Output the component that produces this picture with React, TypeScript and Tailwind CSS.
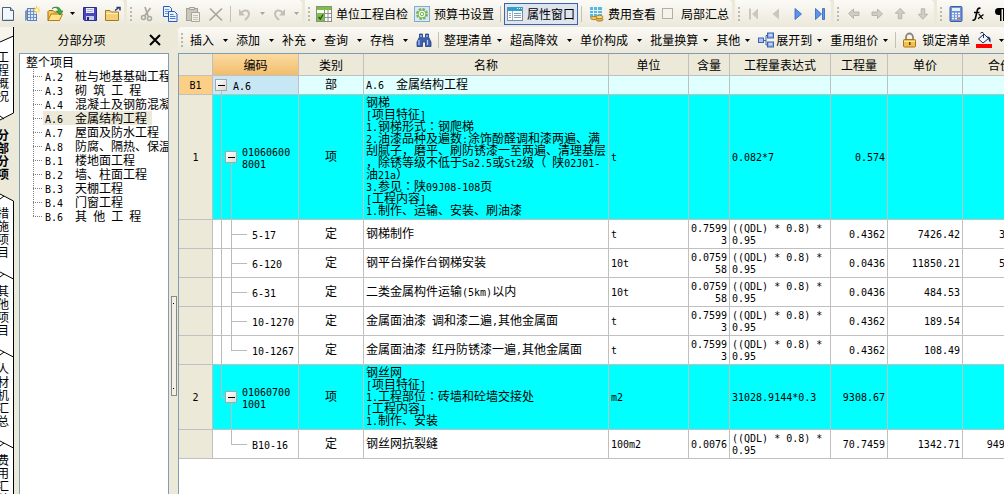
import type { ReactNode } from 'react';

/* Latin runs use a half-width mono face so that two of them fill one Chinese character;
   the full-width colon comes from a face that centres it in its square. */
function T({ children }: { children: string }) {
  const parts = children.split(/([\x20-\x7e]+|：)/).filter((p) => p !== '');
  return (
    <>
      {parts.map((p, i) => {
        if (p === '：') {
          return (
            <span key={i} lang="zh-TW" className="font-['Noto_Sans_CJK_TC',sans-serif]">
              {p}
            </span>
          );
        }
        return /^[\x20-\x7e]/.test(p) ? (
          <span key={i} className="whitespace-pre font-['DejaVu_Sans_Mono',monospace] text-[10px] leading-[0px]">
            {p}
          </span>
        ) : (
          <span key={i}>{p}</span>
        );
      })}
    </>
  );
}

function Icon({ children }: { children: ReactNode }) {
  return (
    <svg viewBox="0 0 16 16" className="size-4 shrink-0" aria-hidden="true">
      {children}
    </svg>
  );
}

const NewDoc = () => (
  <Icon>
    <path d="M2.500 1.500h8l3 3v10h-11z" fill="#f3f7fd" stroke="#4e5f80" />
    <path d="M10.500 1.500v3h3" fill="#b9cbe6" stroke="#4e5f80" />
    <path d="M4 13h9v1H4z" fill="#c5d5ec" />
  </Icon>
);
const NewGrid = () => (
  <Icon>
    <path d="M1 5l3-2v10l-3 2z" fill="#7d93b8" />
    <rect x="3.500" y="2.500" width="9" height="12" fill="#dce8f8" stroke="#5d7fb5" />
    <path d="M6.500 3v11M9.500 3v11M4 5.500h8M4 8.500h8M4 11.500h8" stroke="#6f93c9" />
    <path d="M12.500 0v8M8.500 4h8M10 1.500l5 5M15 1.500l-5 5" stroke="#f4c430" />
    <circle cx="12.500" cy="4" r="1.800" fill="#fff6b0" />
  </Icon>
);
const OpenFolder = () => (
  <Icon>
    <path d="M1 14.500V5.500l1-1h4l1.500 1.500H12v2" fill="#f5c95a" stroke="#9c6a12" />
    <path d="M1 14.500l3-6.500h11.500l-3 6.500z" fill="#ffe38a" stroke="#b57b14" />
    <path d="M5 2.500c3-2 6-1 6.500 2.500H9.500l3.500 4 3-4h-2C13.500 1 9 0 5 2.500z" fill="#3cae3c" stroke="#1c7a25" strokeWidth=".7" />
  </Icon>
);
const Save = () => (
  <Icon>
    <path d="M1.500 1.500h13v13h-12l-1-1z" fill="#4747b8" stroke="#2b2b8c" />
    <path d="M4 2h8v5H4z" fill="#eef0fb" />
    <path d="M5 3.500h6M5 5.500h6" stroke="#a9aee0" />
    <path d="M4 10h8v4H4z" fill="#c9cdf0" />
    <path d="M5 11h2v3H5z" fill="#26267c" />
  </Icon>
);
const FolderUp = () => (
  <Icon>
    <path d="M.5 14.500v-10h4.500l1.500 1.500h7v8.500z" fill="#f5cf78" stroke="#a9781e" />
    <path d="M1 7.500h12" stroke="#fff0bd" />
    <path d="M10 4.500l4-3m-2.500 0H15v3" fill="none" stroke="#26386b" strokeWidth="1.500" />
  </Icon>
);
const Cut = () => (
  <Icon>
    <path d="M6 1l3 9M11.500 2L5.500 10" stroke="#aaa89e" strokeWidth="1.700" />
    <circle cx="4.500" cy="11.500" r="2" fill="none" stroke="#aaa89e" strokeWidth="1.500" />
    <circle cx="10.500" cy="12.500" r="2" fill="none" stroke="#aaa89e" strokeWidth="1.500" />
  </Icon>
);
const Copy = () => (
  <Icon>
    <path d="M1.500.5h6l2 2v8h-8z" fill="#e9f1ff" stroke="#2b5bb8" />
    <path d="M3 3.500h4M3 5.500h5M3 7.500h5" stroke="#6e97dc" />
    <path d="M6.500 5.500h6l2.500 2.500v7.500H6.500z" fill="#e9f1ff" stroke="#2b5bb8" />
    <path d="M8 8.500h3.500M8 10.500h5.500M8 12.500h5.500" stroke="#4c7dd0" />
  </Icon>
);
const Paste = () => (
  <Icon>
    <rect x="1.500" y="2.500" width="11" height="12" fill="#c9c7bc" stroke="#a3a196" />
    <path d="M4.500 3.500v-2h5v2z" fill="#e9e7de" stroke="#a3a196" />
    <path d="M6.500 6.500h8v9h-8z" fill="#f1f0ea" stroke="#a9a79c" />
    <path d="M8 9.500h5M8 11.500h5M8 13.500h5" stroke="#c3c1b7" />
  </Icon>
);
const Cross = () => (
  <Icon>
    <path d="M2 2.500l12 12M14 2.500l-12.500 12" stroke="#a9a79d" strokeWidth="1.700" />
  </Icon>
);
const Undo = () => (
  <Icon>
    <path d="M4 7c3-4 8-3 8 1 0 3-2 4-4 6" fill="none" stroke="#c2c0b6" strokeWidth="2" />
    <path d="M2 3v6.500h6z" fill="#c2c0b6" />
  </Icon>
);
const Redo = () => (
  <Icon>
    <path d="M12 7c-3-4-8-3-8 1 0 3 2 4 4 6" fill="none" stroke="#c2c0b6" strokeWidth="2" />
    <path d="M14 3v6.500H8z" fill="#c2c0b6" />
  </Icon>
);
const SheetCheck = () => (
  <Icon>
    <rect x=".5" y=".5" width="15" height="15" fill="#fff" stroke="#8a8f86" />
    <path d="M1 1h14v3H1z" fill="#7ac143" />
    <path d="M1 7.500h14M1 11.500h14M8.500 4v11M12 4v11" stroke="#8c9389" />
    <rect x="1" y="7" width="7" height="8" fill="#7fbf4a" />
    <path d="M2.500 11l1.800 2L7 8.500" fill="none" stroke="#205c12" strokeWidth="1.400" />
  </Icon>
);
const Gear = () => (
  <Icon>
    <rect x=".5" y=".5" width="15" height="15" fill="#d7e9f7" stroke="#86abc9" />
    <circle cx="8" cy="8" r="5" fill="#eef8e6" stroke="#79b259" strokeWidth="2" strokeDasharray="2.500 1.400" />
    <circle cx="8" cy="8" r="4" fill="#eef8e6" stroke="#79b259" />
    <circle cx="8" cy="8" r="1.700" fill="#fff" stroke="#79b259" />
  </Icon>
);
const PropWindow = () => (
  <Icon>
    <rect x=".5" y="1.500" width="15" height="13" fill="#fff" stroke="#7c8b99" />
    <path d="M1 1h14v4H1z" fill="#2f9fd0" />
    <path d="M10 2.500h1M12 2.500h1M14 2.500h.8" stroke="#fff" />
    <path d="M5.500 5v9" stroke="#a4b2bd" />
    <path d="M2 7.500h2M2 9.500h2M2 11.500h2M7 7.500h7M7 9.500h7M7 11.500h7" stroke="#7fa3b8" />
  </Icon>
);
const Cost = () => (
  <Icon>
    <rect x="2" y="1" width="12" height="10" fill="#5ab8e0" />
    <path d="M2 4.500h12M2 7.500h12M5.500 1v10M9.500 1v10" stroke="#dff3fb" />
    <ellipse cx="6" cy="12" rx="3.500" ry="1.700" fill="#f0c65c" stroke="#a8741a" strokeWidth=".8" />
    <ellipse cx="11.500" cy="13.500" rx="3.500" ry="1.700" fill="#e5b24a" stroke="#a8741a" strokeWidth=".8" />
    <ellipse cx="11.500" cy="11" rx="3.500" ry="1.700" fill="#f7d67e" stroke="#a8741a" strokeWidth=".8" />
  </Icon>
);
const First = () => (
  <Icon>
    <path d="M3 2.500h2v11H3zM12 2.500v11L6 8z" fill="#c9c7be" />
  </Icon>
);
const Prev = () => (
  <Icon>
    <path d="M11 2.500v11L4.500 8z" fill="#c9c7be" />
  </Icon>
);
const Next = () => (
  <Icon>
    <path d="M5 2.500v11L11.500 8z" fill="#5d93ea" stroke="#2e62c4" strokeWidth=".8" />
  </Icon>
);
const Last = () => (
  <Icon>
    <path d="M3.500 2.500v11l6-5.500zM10.500 2.500h2v11h-2z" fill="#5d93ea" stroke="#2e62c4" strokeWidth=".8" />
  </Icon>
);
const ARROW = 'M2.500 7.500l5-4.500v3h5.500v3.500H7.500v3z';
const ArrowL = () => (
  <Icon>
    <path d={ARROW} fill="#cfcdc4" stroke="#aeaca2" strokeWidth=".8" />
  </Icon>
);
const ArrowR = () => (
  <Icon>
    <path d={ARROW} transform="rotate(180 8 7.750)" fill="#cfcdc4" stroke="#aeaca2" strokeWidth=".8" />
  </Icon>
);
const ArrowU = () => (
  <Icon>
    <path d={ARROW} transform="rotate(90 8 7.750)" fill="#cfcdc4" stroke="#aeaca2" strokeWidth=".8" />
  </Icon>
);
const ArrowD = () => (
  <Icon>
    <path d={ARROW} transform="rotate(270 8 7.750)" fill="#cfcdc4" stroke="#aeaca2" strokeWidth=".8" />
  </Icon>
);
const Calculator = () => (
  <Icon>
    <rect x="2" y=".5" width="12" height="15" rx="1" fill="#6f93d6" stroke="#3d5ca3" />
    <rect x="4" y="2" width="8" height="3" fill="#e6f0ff" />
    <path d="M4 7.500h8M4 10h8M4 12.500h8" stroke="#fff" strokeWidth="1.500" strokeDasharray="2 1" />
    <path d="M10 12.500h2" stroke="#e3622f" strokeWidth="1.500" />
  </Icon>
);
const Fx = () => (
  <Icon>
    <path d="M10.500 2.500c-2-1-3 .5-3.500 3L5.500 12c-.5 2-1.500 2.500-3 2M4 6.500h5.500" fill="none" stroke="#000" strokeWidth="1.600" />
    <path d="M8.500 8.500c2-.5 2 4.500 4.500 4M13.500 8.500L8 12.700" fill="none" stroke="#000" strokeWidth="1.300" />
  </Icon>
);
const Pilcrow = () => (
  <Icon>
    <path d="M9 2H6.500a3.500 3.500 0 000 7H8v6h1.500V3.300H11V15h1.500V3.300H14V2z" fill="#000" />
  </Icon>
);
const Binoculars = () => (
  <Icon>
    <path d="M3.500 2h3v3l1 1h1l1-1V2h3v3l2.500 5v4.500H9.500V10h-3v4.500H1V10l2.500-5z" fill="#3c62ad" stroke="#223f7c" strokeWidth=".8" />
    <path d="M3 8v5M11.500 8v5M5 3v2M11 3v2" stroke="#b5cdf3" strokeWidth="1.200" />
  </Icon>
);
const TreeOut = () => (
  <Icon>
    <path d="M5 8.500h3v-5h2M8 8.500v4.500h2" fill="none" stroke="#4466a8" />
    <rect x=".5" y="6" width="5" height="4.500" fill="#a9c4f2" stroke="#3f62ad" />
    <rect x="9.500" y="1" width="6" height="5" fill="#8db1ee" stroke="#3f62ad" />
    <rect x="9.500" y="10" width="6" height="5" fill="#8db1ee" stroke="#3f62ad" />
    <path d="M11 3h3M11 12h3" stroke="#fff" />
  </Icon>
);
const Lock = () => (
  <Icon>
    <path d="M4 8V5a3.500 3.500 0 017 0v3" fill="none" stroke="#8d8a7c" strokeWidth="1.800" />
    <rect x="1.500" y="7.500" width="12" height="7.500" rx="1" fill="#f2c14b" stroke="#a8761a" />
    <path d="M2 9.500h11" stroke="#ffe79f" />
    <path d="M7 10h1.500v3H7z" fill="#5c3d07" />
  </Icon>
);
const Bucket = () => (
  <Icon>
    <path d="M2.500 7L8 2l4.500 4.500L7 11z" fill="#f3f6ff" stroke="#222d5a" />
    <path d="M7.500 6V1.500c0-1.500-3-1.500-3 0" fill="none" stroke="#222d5a" />
    <path d="M11 4.500c3 0 4 2 3.500 6-2-1-1.500-3-2.500-4z" fill="#1a2a7a" />
    <path d="M0 12h16v4H0z" fill="#f00" />
  </Icon>
);

const Caret = ({ dim }: { dim?: boolean }) => (
  <svg viewBox="0 0 5 3" className="h-[3px] w-[5px] shrink-0" aria-hidden="true">
    <path d="M0 0h5L2.500 3z" fill={dim ? '#a9a79c' : '#000'} />
  </svg>
);

const Grip = () => (
  <span className="flex w-2 shrink-0 flex-col items-center gap-[2px]">
    {[0, 1, 2, 3].map((i) => (
      <span key={i} className="size-[2px] bg-[#bdb9a8]" />
    ))}
  </span>
);

const Sep = ({ wide }: { wide?: boolean }) => (
  <span className={`flex shrink-0 justify-center ${wide ? 'w-3' : 'w-[7px]'}`}>
    <span className="h-4 w-px bg-[#c5c2b0]" />
  </span>
);

function IconBtn({ label, children, narrow }: { label: string; children: ReactNode; narrow?: boolean }) {
  return (
    <button aria-label={label} className={`flex h-6 shrink-0 items-center justify-center ${narrow ? 'w-[22px]' : 'w-[23px]'}`}>
      {children}
    </button>
  );
}

const CaretBtn = ({ label, dim }: { label: string; dim?: boolean }) => (
  <button aria-label={label} className="flex h-6 w-3 shrink-0 items-center justify-center">
    <Caret dim={dim} />
  </button>
);

function LabelBtn({ label, icon, active }: { label: string; icon: ReactNode; active?: boolean }) {
  return (
    <button
      className={`flex h-[22px] shrink-0 items-center gap-1 whitespace-nowrap border px-[2px] ${
        active ? 'border-[#3a62ae] bg-[#dfe5ef]' : 'border-transparent'
      }`}
    >
      {icon}
      {label}
    </button>
  );
}

function Menu({ label, size = 'narrow', icon }: { label: string; size?: 'wide' | 'narrow' | 'tight'; icon?: ReactNode }) {
  const pad = size === 'wide' ? 'w-[22px]' : size === 'narrow' ? 'w-[18px] pr-1' : 'w-[14px]';
  return (
    <button className="flex h-6 shrink-0 items-center whitespace-nowrap">
      {icon && <span className="mr-[2px]">{icon}</span>}
      {label}
      <span className={`flex justify-center ${pad}`}>
        <Caret />
      </span>
    </button>
  );
}

const GROUP = 'flex h-[27px] shrink-0 items-center rounded-r-sm bg-linear-to-b from-[#fbfaf6] to-[#ebe8da]';

function MainToolbar() {
  return (
    <div role="toolbar" aria-label="常用" className="flex h-[27px] shrink-0 gap-[3px] overflow-hidden">
      <div className={GROUP}>
        <button aria-label="新建" className="flex h-6 w-5 items-center">
          <NewDoc />
        </button>
        <IconBtn label="新建单位工程"><NewGrid /></IconBtn>
        <IconBtn label="打开"><OpenFolder /></IconBtn>
        <CaretBtn label="打开选项" />
        <IconBtn label="保存"><Save /></IconBtn>
        <IconBtn label="另存为"><FolderUp /></IconBtn>
      </div>
      <div className={GROUP}>
        <Grip />
        <IconBtn label="剪切"><Cut /></IconBtn>
        <IconBtn label="复制"><Copy /></IconBtn>
        <IconBtn label="粘贴"><Paste /></IconBtn>
        <IconBtn label="删除"><Cross /></IconBtn>
        <Sep />
        <IconBtn label="撤销" narrow><Undo /></IconBtn>
        <CaretBtn label="撤销选项" dim />
        <IconBtn label="重做" narrow><Redo /></IconBtn>
        <CaretBtn label="重做选项" dim />
      </div>
      <div className={GROUP}>
        <Grip />
        <LabelBtn label="单位工程自检" icon={<SheetCheck />} />
        <LabelBtn label="预算书设置" icon={<Gear />} />
        <Sep />
        <LabelBtn label="属性窗口" icon={<PropWindow />} active />
        <Sep />
        <LabelBtn label="费用查看" icon={<Cost />} />
        <label className="flex items-center gap-2 whitespace-nowrap px-[3px]">
          <input type="checkbox" className="size-[11px] appearance-none border border-[#b4b09c] bg-[#f4f3ec]" />
          局部汇总
        </label>
      </div>
      <div className={GROUP}>
        <Grip />
        <IconBtn label="首条" narrow><First /></IconBtn>
        <IconBtn label="上一条" narrow><Prev /></IconBtn>
        <IconBtn label="下一条" narrow><Next /></IconBtn>
        <IconBtn label="末条" narrow><Last /></IconBtn>
      </div>
      <div className={GROUP}>
        <Grip />
        <IconBtn label="左移"><ArrowL /></IconBtn>
        <IconBtn label="右移"><ArrowR /></IconBtn>
        <IconBtn label="上移"><ArrowU /></IconBtn>
        <IconBtn label="下移"><ArrowD /></IconBtn>
      </div>
      <div className={`${GROUP} grow`}>
        <Grip />
        <IconBtn label="计算器" narrow><Calculator /></IconBtn>
        <IconBtn label="函数" narrow><Fx /></IconBtn>
        <IconBtn label="段落" narrow><Pilcrow /></IconBtn>
      </div>
    </div>
  );
}

function EditToolbar() {
  return (
    <div role="toolbar" aria-label="编辑" className="flex h-[26px] shrink-0 items-center overflow-hidden rounded-l-sm bg-linear-to-b from-[#fbfaf6] to-[#ebe8da]">
      <Grip />
      <span className="w-1 shrink-0" />
      <Menu label="插入" size="wide" />
      <Menu label="添加" size="wide" />
      <Menu label="补充" />
      <Menu label="查询" size="wide" />
      <Menu label="存档" size="wide" />
      <button aria-label="查找" className="shrink-0"><Binoculars /></button>
      <Sep wide />
      <Menu label="整理清单" />
      <Menu label="超高降效" size="wide" />
      <Menu label="单价构成" size="wide" />
      <Menu label="批量换算" />
      <Menu label="其他" />
      <Menu label="展开到" icon={<TreeOut />} />
      <Menu label="重用组价" size="tight" />
      <Sep />
      <LabelBtn label="锁定清单" icon={<Lock />} />
      <IconBtn label="填充颜色" narrow><Bucket /></IconBtn>
      <CaretBtn label="颜色选项" />
    </div>
  );
}

/* Slanted joint between two neighbouring side tabs. */
function TabJoint({ kind }: { kind: 'toActive' | 'fromActive' | 'plain' }) {
  return (
    <svg viewBox="0 0 14 26" className="h-[26px] w-[14px] shrink-0" aria-hidden="true">
      {kind === 'toActive' ? (
        <>
          <path d="M0 0h14v11L0 18z" fill="#fff" />
          <path d="M13.500 0v11L0 18M0 14l4 3" fill="none" stroke="#000" />
        </>
      ) : (
        <>
          <path d={kind === 'plain' ? 'M0 0h14v26H0z' : 'M0 14l14 7v5H0z'} fill="#fff" />
          <path d={kind === 'plain' ? 'M13.500 0v26M0 14l13.500 7M0 19l4-3' : 'M0 14l13.500 7v5M0 19l4-3'} fill="none" stroke="#000" />
        </>
      )}
    </svg>
  );
}

const SideTab = ({ label, active }: { label: string; active?: boolean }) => (
  <button
    className={`w-[14px] shrink-0 overflow-hidden border-r ${active ? 'border-transparent font-bold' : 'border-black bg-white'}`}
  >
    <span className="-ml-[3px] block w-3 break-all leading-[13px]">{label}</span>
  </button>
);

function SideTabs() {
  return (
    <nav aria-label="页签" className="flex w-[14px] shrink-0 flex-col overflow-hidden">
      <svg viewBox="0 0 14 23" className="h-[23px] w-[14px] shrink-0" aria-hidden="true">
        <path d="M0 0h13v9L0 15z" fill="#f6f4ec" />
        <path d="M0 15l14-6v14H0z" fill="#fff" />
        <path d="M0 15l13.500-6M13.500 0v23" fill="none" stroke="#000" />
      </svg>
      <SideTab label="工程概况" />
      <TabJoint kind="toActive" />
      <SideTab label="分部分项" active />
      <TabJoint kind="fromActive" />
      <SideTab label="措施项目" />
      <TabJoint kind="plain" />
      <SideTab label="其他项目" />
      <TabJoint kind="plain" />
      <SideTab label="人材机汇总" />
      <TabJoint kind="plain" />
      <SideTab label="费用汇总" />
    </nav>
  );
}

const SECTIONS = [
  'A.2  桩与地基基础工程',
  'A.3  砌 筑 工 程',
  'A.4  混凝土及钢筋混凝土工程',
  'A.6  金属结构工程',
  'A.7  屋面及防水工程',
  'A.8  防腐、隔热、保温工程',
  'B.1  楼地面工程',
  'B.2  墙、柱面工程',
  'B.3  天棚工程',
  'B.4  门窗工程',
  'B.6  其 他 工 程',
];

function SectionPanel() {
  return (
    <aside className="flex w-[155px] shrink-0 flex-col pl-[5px]">
      <header className="flex h-[26px] shrink-0 items-center pr-2">
        <h2 className="flex-1 pr-[5px] text-center">分部分项</h2>
        <button aria-label="关闭">
          <svg viewBox="0 0 12 12" className="size-3" aria-hidden="true">
            <path d="M1 1l10 10M11 1L1 11" stroke="#000" strokeWidth="2" />
          </svg>
        </button>
      </header>
      <div className="min-h-0 flex-1 overflow-hidden border border-b-0 border-[#7f9db9] bg-white">
        <div className="h-[15px] pl-[6px] leading-[15px]">整个项目</div>
        <ul className="pl-[13px]">
          {SECTIONS.map((s, i) => (
            <li key={s} className="flex h-[14px] whitespace-nowrap leading-[14px]">
              <svg viewBox="0 0 10 14" className="h-[14px] w-[10px] shrink-0" aria-hidden="true">
                <path d={i === SECTIONS.length - 1 ? 'M.5 0v8' : 'M.5 0v14'} stroke="#808080" strokeDasharray="1 1" />
                <path d="M0 7.500h10" stroke="#808080" strokeDasharray="1 1" />
              </svg>
              <span className={`pl-[2px] pr-[5px] ${i === 3 ? 'bg-[#ece9d8]' : ''}`}>
                <T>{s}</T>
              </span>
            </li>
          ))}
        </ul>
      </div>
    </aside>
  );
}

const Splitter = () => (
  <div role="separator" className="flex w-[9px] shrink-0 justify-center pt-[269px]">
    <span className="flex h-[100px] w-[6px] flex-col items-center justify-between border border-[#8c8a7e] bg-[#f2f0e6] py-[6px]">
      <span className="size-px bg-black" />
      <span className="size-px bg-black" />
    </span>
  </div>
);

type Row = {
  no: string;
  kind: 'part' | 'item' | 'quota';
  last?: boolean;
  tail?: boolean;
  code: string[];
  type: string;
  name: string[];
  unit?: string;
  content?: string[];
  expr?: string[];
  qty?: string;
  price?: string;
  total?: string;
};

const QDL = ['((QDL) * 0.8) *', '0.95'];

const ROWS: Row[] = [
  { no: 'B1', kind: 'part', code: ['A.6'], type: '部', name: ['A.6  金属结构工程'] },
  {
    no: '1',
    kind: 'item',
    code: ['01060600', '8001'],
    type: '项',
    name: [
      '钢梯',
      '[项目特征]',
      '1.钢梯形式：钢爬梯',
      '2.油漆品种及遍数:涂饰酚醛调和漆两遍、满',
      '刮腻子，磨平、刷防锈漆一至两遍、清理基层',
      '，除锈等级不低于Sa2.5或St2级（ 陕02J01-',
      '油21a）',
      '3.参见：陕09J08-108页',
      '[工程内容]',
      '1.制作、运输、安装、刷油漆',
    ],
    unit: 't',
    expr: ['0.082*7'],
    qty: '0.574',
  },
  { no: '', kind: 'quota', code: ['5-17'], type: '定', name: ['钢梯制作'], unit: 't', content: ['0.7599', '3'], expr: QDL, qty: '0.4362', price: '7426.42', total: '3239.4' },
  { no: '', kind: 'quota', code: ['6-120'], type: '定', name: ['钢平台操作台钢梯安装'], unit: '10t', content: ['0.0759', '58'], expr: QDL, qty: '0.0436', price: '11850.21', total: '516.67' },
  { no: '', kind: 'quota', code: ['6-31'], type: '定', name: ['二类金属构件运输(5km)以内'], unit: '10t', content: ['0.0759', '58'], expr: QDL, qty: '0.0436', price: '484.53', total: '21.13' },
  { no: '', kind: 'quota', code: ['10-1270'], type: '定', name: ['金属面油漆 调和漆二遍,其他金属面'], unit: 't', content: ['0.7599', '3'], expr: QDL, qty: '0.4362', price: '189.54', total: '82.68' },
  { no: '', kind: 'quota', last: true, code: ['10-1267'], type: '定', name: ['金属面油漆 红丹防锈漆一遍,其他金属面'], unit: 't', content: ['0.7599', '3'], expr: QDL, qty: '0.4362', price: '108.49', total: '47.32' },
  {
    no: '2',
    kind: 'item',
    tail: true,
    code: ['01060700', '1001'],
    type: '项',
    name: ['钢丝网', '[项目特征]', '1.工程部位：砖墙和砼墙交接处', '[工程内容]', '1.制作、安装'],
    unit: 'm2',
    expr: ['31028.9144*0.3'],
    qty: '9308.67',
  },
  { no: '', kind: 'quota', last: true, tail: true, code: ['B10-16'], type: '定', name: ['钢丝网抗裂缝'], unit: '100m2', content: ['0.0076'], expr: QDL, qty: '70.7459', price: '1342.71', total: '94991.23' },
];

const Lines = ({ of }: { of?: string[] }) => (
  <>
    {(of ?? []).map((l, i) => (
      <div key={i} className="h-3 whitespace-nowrap">
        <T>{l}</T>
      </div>
    ))}
  </>
);

const Collapse = () => (
  <button aria-label="折叠" className="relative flex size-3 shrink-0 items-center justify-center border border-[#a8a8a8] bg-linear-to-br from-white to-[#dcdad2]">
    <span className="h-px w-[7px] bg-black" />
  </button>
);

function CodeCell({ row }: { row: Row }) {
  const line = 'absolute bg-[#b9bcbc]';
  return (
    <>
      {row.kind === 'part' && <span className={`${line} bottom-0 left-2 h-1/2 w-px`} />}
      {row.kind === 'item' && (
        <>
          <span className={`${line} left-2 top-0 w-px ${row.tail ? 'h-1/2' : 'h-full'}`} />
          <span className={`${line} left-2 top-1/2 h-px w-1`} />
          <span className={`${line} bottom-0 left-[18px] h-1/2 w-px`} />
        </>
      )}
      {row.kind === 'quota' && (
        <>
          {!row.tail && <span className={`${line} -bottom-px left-2 top-0 w-px`} />}
          <span className={`${line} left-[18px] top-0 w-px ${row.last ? 'h-1/2' : '-bottom-px'}`} />
          <span className={`${line} left-[18px] top-1/2 h-px w-4`} />
        </>
      )}
      <div className={`flex items-center ${row.kind === 'part' ? 'gap-[6px] pl-[2px]' : row.kind === 'item' ? 'gap-[5px] pl-3' : 'pl-[39px]'}`}>
        {row.kind !== 'quota' && <Collapse />}
        <div>
          <Lines of={row.code} />
        </div>
      </div>
    </>
  );
}

const ROW_BG = {
  part: 'h-[19px] bg-[#e0ffff]',
  item: 'bg-[#00ffff]',
  quota: 'h-[29px] bg-white',
};

const HEADS = ['', '编码', '类别', '名称', '单位', '含量', '工程量表达式', '工程量', '单价', '合价'];

function CostTable() {
  const cell = 'border-b border-r border-[#c0c0c0] px-[2px] pb-[3px] pt-px overflow-hidden';
  return (
    <div className="min-h-0 flex-1 overflow-hidden border-l border-t border-[#7f9db9] bg-white">
      <table className="w-[859px] table-fixed border-separate border-spacing-0 leading-3">
        <colgroup>
          <col className="w-[34px]" />
          <col className="w-[86px]" />
          <col className="w-[65px]" />
          <col className="w-[245px]" />
          <col className="w-[80px]" />
          <col className="w-[41px]" />
          <col className="w-[101px]" />
          <col className="w-[57px]" />
          <col className="w-[75px]" />
          <col className="w-[75px]" />
        </colgroup>
        <thead>
          <tr className="h-[22px] bg-[#ece9d8]">
            {HEADS.map((h, i) => (
              <th
                key={h}
                scope="col"
                className={`border-b border-r border-[#c0c0c0] p-0 font-normal ${i === 1 ? 'bg-linear-to-b from-[#fbdba0] to-[#f1bd6c]' : ''}`}
              >
                {h}
              </th>
            ))}
          </tr>
        </thead>
        <tbody>
          {ROWS.map((r, i) => (
            <tr key={i} className={ROW_BG[r.kind]}>
              <td className={`${cell} text-center ${r.kind === 'part' ? 'bg-[#fbcf86]' : 'bg-[#ece9d8]'}`}>
                <Lines of={r.no ? [r.no] : []} />
              </td>
              <td className={`relative border-b border-r border-[#c0c0c0] p-0 ${r.kind === 'part' ? 'bg-[#c6e7f3]' : ''}`}>
                <CodeCell row={r} />
              </td>
              <td className={`${cell} text-center`}>{r.type}</td>
              <td className={cell}><Lines of={r.name} /></td>
              <td className={cell}><Lines of={r.unit ? [r.unit] : []} /></td>
              <td className={`${cell} text-right`}><Lines of={r.content} /></td>
              <td className={cell}><Lines of={r.expr} /></td>
              <td className={`${cell} text-right`}><Lines of={r.qty ? [r.qty] : []} /></td>
              <td className={`${cell} text-right`}><Lines of={r.price ? [r.price] : []} /></td>
              <td className={`${cell} text-right`}><Lines of={r.total ? [r.total] : []} /></td>
            </tr>
          ))}
        </tbody>
      </table>
    </div>
  );
}

export default function App() {
  return (
    <div className="flex h-screen flex-col overflow-hidden bg-[#ece9d8] font-['Noto_Sans_CJK_SC',sans-serif] text-xs text-black">
      <MainToolbar />
      <div className="flex min-h-0 flex-1">
        <SideTabs />
        <SectionPanel />
        <Splitter />
        <main className="flex min-w-0 flex-1 flex-col">
          <EditToolbar />
          <CostTable />
        </main>
      </div>
    </div>
  );
}
